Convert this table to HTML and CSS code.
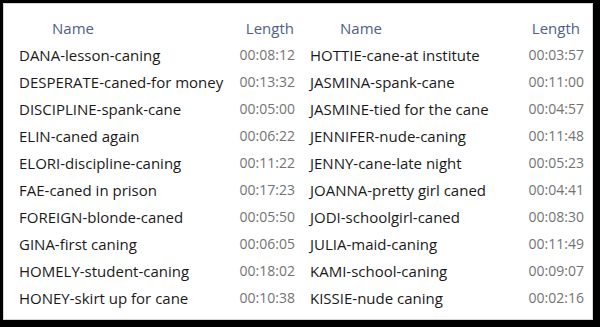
FILE: index.html
```html
<!DOCTYPE html>
<html>
<head>
<meta charset="utf-8">
<link rel="stylesheet" href="styles.css">
</head>
<body>
<div class="frame">
  <div class="panel left">
    <div class="row head"><span class="name">Name</span><span class="len">Length</span></div>
    <div class="row"><span class="name">DANA-lesson-caning</span><span class="len">00:08:12</span></div>
    <div class="row"><span class="name">DESPERATE-caned-for money</span><span class="len">00:13:32</span></div>
    <div class="row"><span class="name">DISCIPLINE-spank-cane</span><span class="len">00:05:00</span></div>
    <div class="row"><span class="name">ELIN-caned again</span><span class="len">00:06:22</span></div>
    <div class="row"><span class="name">ELORI-discipline-caning</span><span class="len">00:11:22</span></div>
    <div class="row"><span class="name">FAE-caned in prison</span><span class="len">00:17:23</span></div>
    <div class="row"><span class="name">FOREIGN-blonde-caned</span><span class="len">00:05:50</span></div>
    <div class="row"><span class="name">GINA-first caning</span><span class="len">00:06:05</span></div>
    <div class="row"><span class="name">HOMELY-student-caning</span><span class="len">00:18:02</span></div>
    <div class="row"><span class="name">HONEY-skirt up for cane</span><span class="len">00:10:38</span></div>
  </div>
  <div class="panel right">
    <div class="row head"><span class="name">Name</span><span class="len">Length</span></div>
    <div class="row"><span class="name">HOTTIE-cane-at institute</span><span class="len">00:03:57</span></div>
    <div class="row"><span class="name">JASMINA-spank-cane</span><span class="len">00:11:00</span></div>
    <div class="row"><span class="name">JASMINE-tied for the cane</span><span class="len">00:04:57</span></div>
    <div class="row"><span class="name">JENNIFER-nude-caning</span><span class="len">00:11:48</span></div>
    <div class="row"><span class="name">JENNY-cane-late night</span><span class="len">00:05:23</span></div>
    <div class="row"><span class="name">JOANNA-pretty girl caned</span><span class="len">00:04:41</span></div>
    <div class="row"><span class="name">JODI-schoolgirl-caned</span><span class="len">00:08:30</span></div>
    <div class="row"><span class="name">JULIA-maid-caning</span><span class="len">00:11:49</span></div>
    <div class="row"><span class="name">KAMI-school-caning</span><span class="len">00:09:07</span></div>
    <div class="row"><span class="name">KISSIE-nude caning</span><span class="len">00:02:16</span></div>
  </div>
</div>
</body>
</html>
```
FILE: styles.css
```css
html, body {
  margin: 0;
  padding: 0;
  background: #000;
}
.frame {
  width: 590px;
  height: 317px;
  margin: 3px 0 0 3px;
  background: #fff;
  box-shadow: inset 0 0 0 1px #d4d4d4;
  display: flex;
  box-sizing: border-box;
  padding-top: 11px;
  font-family: "Open Sans", sans-serif;
  font-size: 15px;
}
.panel {
  display: flex;
  flex-direction: column;
}
.left {
  width: 297px;
  padding: 0 5px 0 16px;
  box-sizing: border-box;
}
.right {
  width: 293px;
  padding: 0 9px 0 10px;
  box-sizing: border-box;
}
.row {
  height: 27px;
  display: flex;
  align-items: center;
  justify-content: space-between;
}
.name {
  color: #1a1a1a;
}
.len {
  color: #737373;
  font-size: 14px;
}
.head .name,
.head .len {
  color: #4e6182;
  font-size: 15px;
}
.left .head .name { padding-left: 33px; }
.right .head .name { padding-left: 30px; }
.left .head .len { padding-right: 1px; }
.right .head .len { padding-right: 4px; }
```
